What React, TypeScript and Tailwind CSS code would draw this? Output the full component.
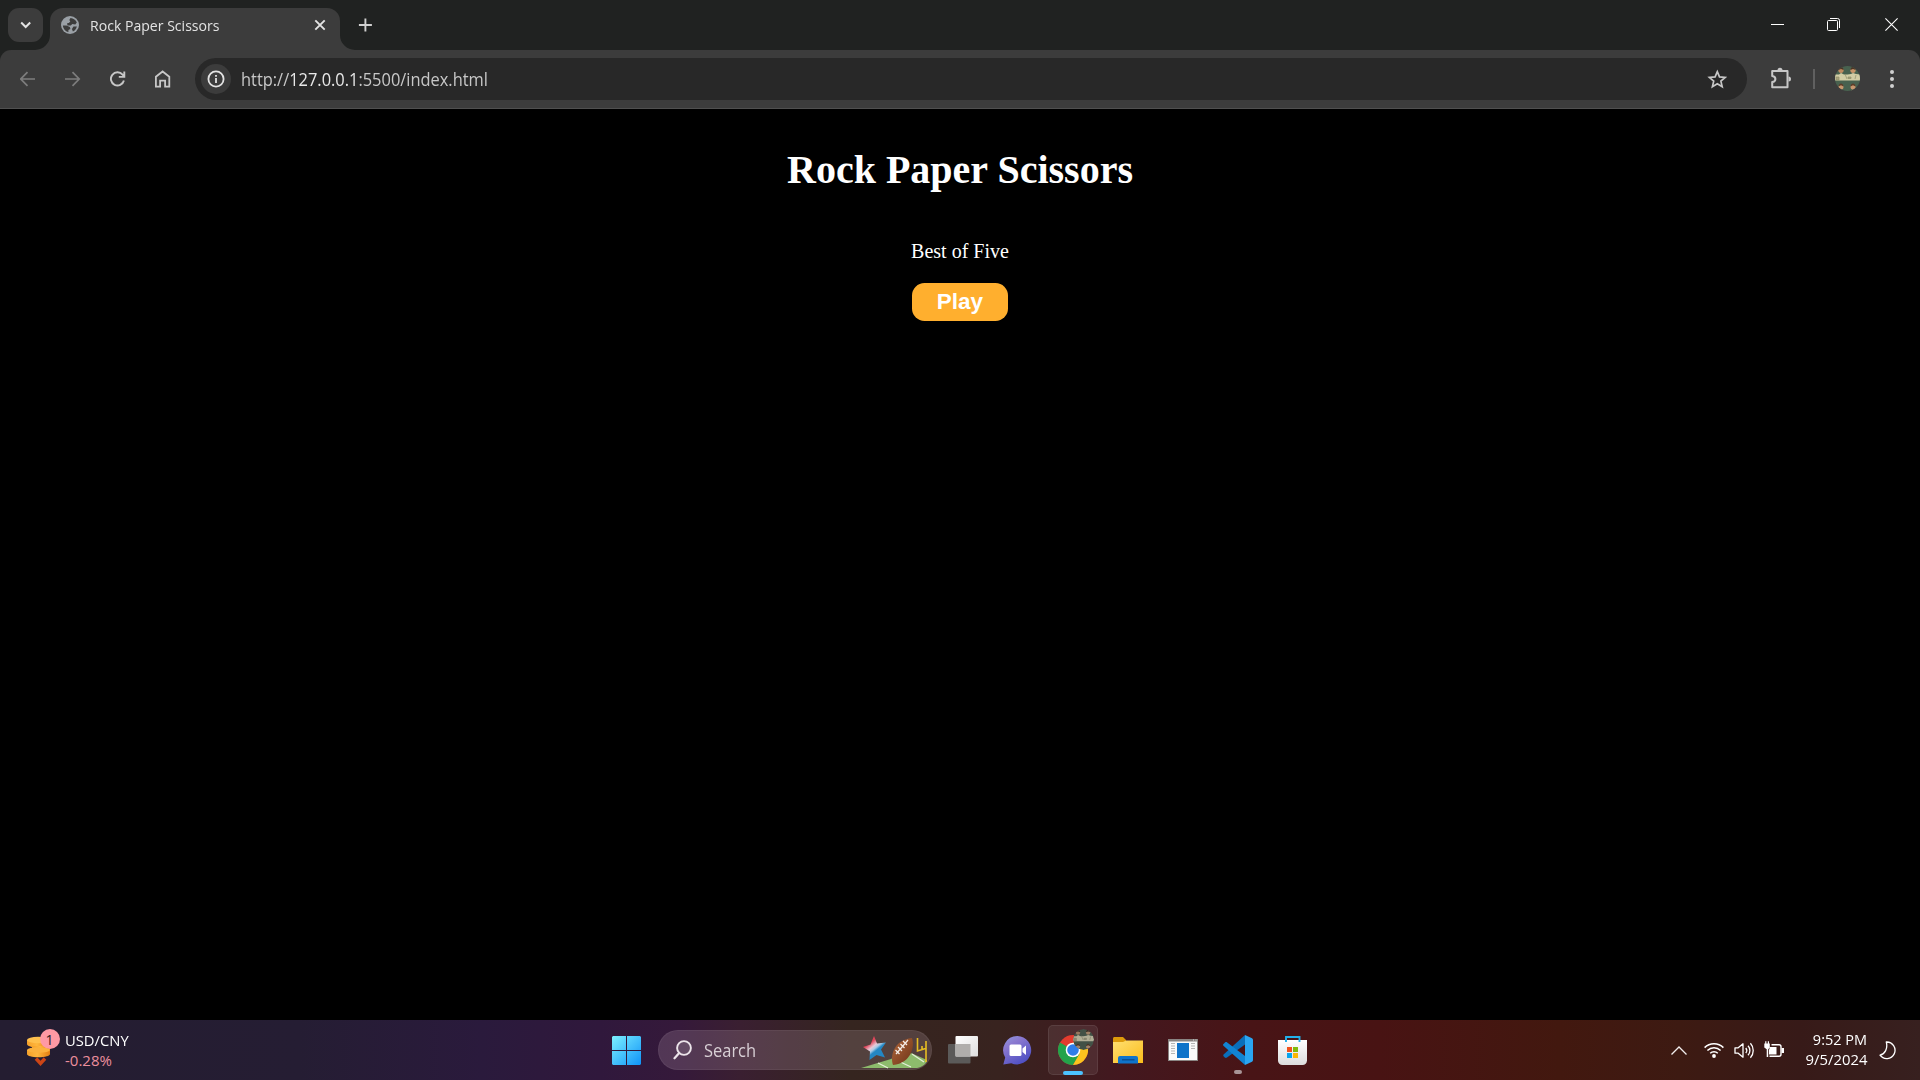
import type { ReactNode } from 'react';

function TabFlare({ side }: { side: 'left' | 'right' }) {
  return (
    <svg
      viewBox="0 0 15 15"
      className={
        side === 'left'
          ? 'absolute bottom-0 -left-[15px] size-[15px]'
          : 'absolute bottom-0 -right-[15px] size-[15px] -scale-x-100'
      }
    >
      <path d="M15 0v15H0A15 15 0 0 0 15 0Z" fill="#3c3c3c" />
    </svg>
  );
}

function TabStrip() {
  return (
    <div className="flex h-[50px] bg-[#202221]">
      <div className="mt-2 ml-2 flex h-[34px] w-[35px] items-center justify-center rounded-[11px] bg-[#3c3c3c]">
        <svg viewBox="0 0 12 8" className="h-2 w-3" fill="none" stroke="#e3e3e3" strokeWidth="2">
          <path d="M1.200 1.500 5.700 6l4.500-4.500" />
        </svg>
      </div>

      <div className="relative mt-[7.500px] ml-[7px] flex h-[42.500px] w-[290px] items-center rounded-t-[13px] bg-[#3c3c3c] pr-[14px] pb-2 pl-[11px]">
        <TabFlare side="left" />
        <svg viewBox="0 0 18 18" className="size-[18px]">
          <circle cx="9" cy="9" r="9" fill="#9aa0a6" />
          <path
            d="M9.500 1.900c3 .2 5.400 2 6.300 4.600l-1.500 2-3-.5-1.500 1.500H6.300V7h1.500l1.500-1.500-1-1.500Z"
            fill="#3c3c3c"
          />
          <path d="M1.900 9.500h3.500l3.500 1.500.5 2-2 1v2C4.400 15.400 2.100 12.800 1.900 9.500Z" fill="#3c3c3c" />
          <path d="M12.500 10.500h3.400c-.5 2.300-2 4.100-4 5l-1-2.500Z" fill="#3c3c3c" />
        </svg>
        <span className="ml-[11px] w-[218px] origin-left scale-x-[0.938] text-[15px] leading-5 whitespace-nowrap text-[#e3e3e3]">
          Rock Paper Scissors
        </span>
        <svg viewBox="0 0 12 12" className="absolute top-[11.500px] right-[14px] size-3" stroke="#e3e3e3" strokeWidth="1.900">
          <path d="M1.300 1.300 10.700 10.700M10.700 1.300 1.300 10.700" />
        </svg>
        <TabFlare side="right" />
      </div>

      <svg viewBox="0 0 14 14" className="mt-[18px] ml-[18px] size-[14px]" stroke="#d0d0d0" strokeWidth="1.900">
        <path d="M7.400.5v13M.900 7h13" />
      </svg>

      <div className="ml-auto flex">
        <div className="flex h-[49px] w-[56px] items-center justify-center">
          <div className="h-px w-[13px] bg-white" />
        </div>
        <div className="flex h-[49px] w-[57px] items-center justify-center">
          <svg viewBox="0 0 13 13" className="size-[13px]" fill="none" stroke="#fff">
            <rect x=".5" y="2.500" width="10" height="10" rx="1" />
            <path d="M3 .5h7.500a2 2 0 0 1 2 2V10" />
          </svg>
        </div>
        <div className="flex h-[49px] w-[58px] items-center justify-center">
          <svg viewBox="0 0 13 13" className="size-[13px]" fill="none" stroke="#fff" strokeWidth="1.100">
            <path d="M.4.4l12.200 12.200M12.600.4.4 12.600" />
          </svg>
        </div>
      </div>
    </div>
  );
}

function NavCell({ children }: { children: ReactNode }) {
  return <div className="flex h-[42px] w-[45px] items-center justify-center">{children}</div>;
}

/* Group portrait inside the profile circle: four heads, light clothes, green ground. */
function Avatar({ className }: { className: string }) {
  return (
    <svg viewBox="0 0 25 25" className={className}>
      <defs>
        <clipPath id="avatar-disc">
          <circle cx="12.500" cy="12.500" r="12.500" />
        </clipPath>
      </defs>
      <g clipPath="url(#avatar-disc)">
        <path d="M0 0h25v25H0z" fill="#48614f" />
        <path d="M0 8.500h4l2-1.500 3 1.500h3.500L16 8l2-1 3 1 4 .5v6H0Z" fill="#d3cda5" />
        <path d="M1 11h3v3H1zM10 8l2 5M13 11h3v1.500h-3zM21 9l-1 4" fill="#a8a27c" stroke="#8f8f6c" strokeWidth=".7" />
        <circle cx="6" cy="4.300" r="2.600" fill="#c08a5f" />
        <circle cx="18" cy="4.300" r="2.600" fill="#c99468" />
        <path d="M3.400 4c0-4 5.200-4 5.200 0L6 3ZM15.400 4c0-4 5.200-4 5.200 0L18 3Z" fill="#4a3527" />
        <circle cx="6" cy="21" r="2.500" fill="#c9976e" />
        <circle cx="18" cy="21" r="2.500" fill="#c9976e" />
        <path d="M3.500 20.500c0-4 5-4 5 0L6 19.300ZM15.500 20.500c0-4 5-4 5 0L18 19.300Z" fill="#5c3d29" />
        <path d="m4 25 2-1.500L8 25ZM16 25l2-1.500 2 1.500Z" fill="#e3d8ae" />
      </g>
    </svg>
  );
}

function Toolbar() {
  return (
    <div className="bg-[#202221]">
      <div className="flex h-[59px] items-start rounded-t-[11px] border-b border-[#505050] bg-[#3c3c3c] pt-2 pl-[5px]">
        <NavCell>
          <svg viewBox="0 0 16 16" className="size-4" fill="none" stroke="#7d7d7d" strokeWidth="1.700">
            <path d="M15 8H1M7.500 1.200.8 8l6.700 6.800" />
          </svg>
        </NavCell>
        <NavCell>
          <svg viewBox="0 0 16 16" className="size-4" fill="none" stroke="#7d7d7d" strokeWidth="1.700">
            <path d="M0 8h14M7.500 1.200 14.200 8l-6.700 6.800" />
          </svg>
        </NavCell>
        <NavCell>
          <svg viewBox="0 0 16 16" className="size-4" fill="none" stroke="#c7c7c7" strokeWidth="1.900">
            <path d="M13.900 9.500A6.600 6.600 0 1 1 12.600 3.700l1 1.200M14.300.5v5.400H8.800" />
          </svg>
        </NavCell>
        <NavCell>
          <svg viewBox="0 0 16 18" className="h-[18px] w-4" fill="none" stroke="#c7c7c7" strokeWidth="1.800">
            <path d="M.9 16.600V6.800l6.700-5.300 6.700 5.300v9.800h-4.200v-6h-5v6Z" />
          </svg>
        </NavCell>

        <div className="ml-[10px] flex h-[42px] w-[1552px] items-center rounded-full bg-[#282828] pr-5 pl-[6px]">
          <div className="flex size-[30px] items-center justify-center rounded-full bg-[#3c3c3c]">
            <svg viewBox="0 0 18 18" className="size-[18px]" fill="none" stroke="#e3e3e3" strokeWidth="1.800">
              <circle cx="9" cy="9" r="7.600" />
              <path d="M9 8v5M9 5v1.800" />
            </svg>
          </div>
          <span className="ml-[10px] origin-left scale-x-[0.938] text-[17.500px] leading-6 whitespace-nowrap text-[#c7c7c7]">
            http://<span className="text-[#e8e8e8]">127.0.0.1</span>:5500/index.html
          </span>
          <svg viewBox="0 0 20 20" className="ml-auto size-5" fill="none" stroke="#c7c7c7" strokeWidth="1.700">
            <path d="m10.300 2.600 2.200 5.300 5.700.5-4.300 3.700 1.300 5.600-4.900-3-4.900 3 1.300-5.600-4.300-3.700 5.700-.5Z" />
          </svg>
        </div>

        <div className="flex h-[42px] items-center">
          <svg viewBox="0 0 22 22" className="mb-[2px] ml-[23px] size-[22px]" fill="none" stroke="#c7c7c7" strokeWidth="2">
            <path d="M3 4h14.500v16.200H2.200v-5.100c2.300-.3 3.200-1.300 3.200-3.100S4.500 9.200 2.200 8.900V4Z" strokeLinejoin="round" />
            <path d="M7.500 3.200a2.500 2.500 0 0 1 5 0ZM18.500 9.500a2.500 2.500 0 0 1 0 5Z" fill="#c7c7c7" stroke="none" />
          </svg>
          <div className="ml-[21px] h-5 w-[2px] bg-[#606060]" />
          <Avatar className="mb-px ml-[20px] size-[25px]" />
          <svg viewBox="0 0 4 18" className="ml-[30px] h-[18px] w-1" fill="#d0d0d0">
            <circle cx="2" cy="2" r="2" />
            <circle cx="2" cy="9" r="2" />
            <circle cx="2" cy="16" r="2" />
          </svg>
        </div>
      </div>
    </div>
  );
}

function Page() {
  return (
    <main className="flex flex-1 flex-col items-center bg-black pt-[38px] font-['Liberation_Serif',serif] text-white">
      <h1 className="text-[40px] leading-[45px] font-bold">Rock Paper Scissors</h1>
      <p className="mt-[48px] text-[20px] leading-[23px]">Best of Five</p>
      <button className="mt-5 h-[38px] w-24 rounded-[12.500px] bg-[#ffaf2e] pb-px font-['Liberation_Sans',sans-serif] text-[22.500px] leading-[25px] font-bold">
        Play
      </button>
    </main>
  );
}

function MarketWidget() {
  return (
    <div className="flex w-[612px] items-center pl-[26px]">
      <div className="relative h-[40px] w-[34px]">
        <svg viewBox="0 0 34 40" className="h-[40px] w-[34px]">
          <defs>
            <linearGradient id="coin" x1="0" x2="1">
              <stop offset="0" stopColor="#f5a02a" />
              <stop offset=".45" stopColor="#ffb63c" />
              <stop offset="1" stopColor="#e27f12" />
            </linearGradient>
          </defs>
          <path d="M1 10v4c0 2 5 3.500 11 3.500S23 16 23 14v-4Z" fill="url(#coin)" />
          <ellipse cx="12" cy="10" rx="11" ry="3.300" fill="#ffc04d" />
          <path d="M6 16v4c0 1.500 4 2.500 9 2.500s9-1 9-2.500v-4Z" fill="url(#coin)" />
          <path d="M1 20v4c0 2 5 3.200 11.500 3.200S24 26 24 24v-4Z" fill="url(#coin)" />
          <ellipse cx="12.500" cy="20" rx="11.500" ry="2.800" fill="#fbb13d" />
          <path d="m10 28.500 4.500 5 4.500-5" fill="none" stroke="#cc4516" strokeWidth="3.500" />
        </svg>
        <div className="absolute -top-[1px] right-[.5px] flex size-5 items-center justify-center rounded-full bg-[#ff99a4] text-[14px] text-[#2b1b22]">
          1
        </div>
      </div>
      <div className="ml-[5px] text-[15px] leading-5">
        <div className="origin-left scale-x-[0.985] text-white">USD/CNY</div>
        <div className="text-[#ec8f9d]">-0.28%</div>
      </div>
    </div>
  );
}

function SearchIllustration() {
  return (
    <svg viewBox="0 0 72 40" className="ml-auto h-10 w-[72px]">
      <defs>
        <linearGradient id="star" x1="6" y1="8" x2="22" y2="28" gradientUnits="userSpaceOnUse">
          <stop offset=".3" stopColor="#e0455a" />
          <stop offset=".48" stopColor="#e9c9d6" />
          <stop offset=".58" stopColor="#a9cbe6" />
          <stop offset=".68" stopColor="#2387c4" />
        </linearGradient>
        <linearGradient id="ball" x1="0" y1="0" x2="1" y2="1">
          <stop offset="0" stopColor="#b0663a" />
          <stop offset="1" stopColor="#6d3418" />
        </linearGradient>
      </defs>
      <path d="M3 38 53 23l16 7c0 3-4 7-10 8Z" fill="#8dbb6c" />
      <path d="m20 33 10 5M34 28l19 9M54 24l12 8" stroke="#e5efd9" strokeWidth="1.300" />
      <path d="m16 6 3 7.500 9-1-5 7 4 8-8.500-2.500-7 5 .5-8.500L5 17l7.500-2.500Z" fill="url(#star)" />
      <path d="M59.500 8v13l8-2.500M68 11v21M64 20v-4" fill="none" stroke="#e6bd22" strokeWidth="1.600" />
      <path d="M35 35c-3-8 0-25 19-27 3 9-1 25-19 27Z" fill="url(#ball)" />
      <path d="m38 24 12-14M37.500 20l4 4M40 17l4 4M42.500 14l4 4M45 11l4 4" stroke="#f4ece6" strokeWidth="1.300" />
    </svg>
  );
}

function TaskCell({ children }: { children: ReactNode }) {
  return <div className="flex w-[55px] items-center justify-center">{children}</div>;
}

function Taskbar() {
  return (
    <footer className="flex h-[60px] bg-[linear-gradient(90deg,#241d31_0px,#251d33_300px,#2a1a3c_480px,#30183c_600px,#35193a_680px,#3a1f31_740px,#35251f_850px,#38231f_1000px,#43181f_1120px,#481416_1250px,#481313_1380px,#42180f_1560px,#3d1a12_1680px,#371a18_1800px,#37201f_1920px)] text-white">
      <MarketWidget />
      <svg viewBox="0 0 29 29" className="mt-4 size-[29px]">
        <defs>
          <linearGradient id="win" x1="0" y1="0" x2="29" y2="29" gradientUnits="userSpaceOnUse">
            <stop offset="0" stopColor="#7df0ff" />
            <stop offset="1" stopColor="#0f93f8" />
          </linearGradient>
        </defs>
        <path d="M1 0h13v14H0V1ZM15 0h13l1 1v13H15ZM0 15h14v14H1l-1-1ZM15 15h14v13l-1 1H15Z" fill="url(#win)" />
      </svg>

      <div className="mt-[10px] ml-[17px] flex h-10 w-[274px] items-center rounded-full border border-white/5 bg-[#ffe6f0]/15 pr-px pl-[14px]">
        <svg viewBox="0 0 19 20" className="h-5 w-[19px]" fill="none" stroke="#ece4ea" strokeWidth="1.900">
          <circle cx="11" cy="8" r="6.900" fill="#fff" fillOpacity=".1" />
          <path d="m6.200 13-4.700 5.300" strokeLinecap="round" strokeWidth="2.200" />
        </svg>
        <span className="ml-[11.500px] w-[56px] origin-left scale-x-[0.94] text-[17.500px] leading-6 text-[#d8cfd5]">Search</span>
        <SearchIllustration />
      </div>

      <div className="ml-[3px] flex">
        <TaskCell>
          <svg viewBox="0 0 30 28" className="h-7 w-[30px]">
            <defs>
              <linearGradient id="tvFront" x2="1" y2="1">
                <stop stopColor="#fff" />
                <stop offset="1" stopColor="#dedede" />
              </linearGradient>
            </defs>
            <rect y="8" width="22.500" height="19.500" rx="1" fill="#5b5a59" />
            <rect x="7.500" width="22.500" height="20.500" rx="1" fill="url(#tvFront)" />
            <path d="M7.500 8h15v12.500h-15z" fill="#b0aeac" />
          </svg>
        </TaskCell>
        <TaskCell>
          <svg viewBox="0 0 29 29" className="size-[29px]">
            <defs>
              <linearGradient id="chat" x1="0" x2=".6" y2="1">
                <stop stopColor="#8f9ae0" />
                <stop offset=".35" stopColor="#8a78cf" />
                <stop offset="1" stopColor="#4f50c4" />
              </linearGradient>
            </defs>
            <path d="M14.500 0a14.200 14.200 0 1 1-6.200 27.200L.3 28.500l1.900-7A14.200 14.200 0 0 1 14.500 0Z" fill="url(#chat)" />
            <rect x="6.500" y="8.500" width="12" height="11.500" rx="1.500" fill="#fff" />
            <path d="m19.500 12.500 3.500-3v9.500l-3.500-3Z" fill="#fff" />
          </svg>
        </TaskCell>
        <TaskCell>
          <div className="relative flex size-[50px] items-center justify-center rounded-[5px] border border-white/8 bg-white/8">
            <svg viewBox="0 0 30 30" className="size-[30px]">
              <circle cx="15" cy="15" r="15" fill="#e33b2e" />
              <path d="M15 15 2 7.500A15 15 0 0 0 15 30l7-11Z" fill="#23a34a" />
              <path d="M15 7.500h13A15 15 0 0 1 15 30l6.500-11.200Z" fill="#fcc31e" />
              <circle cx="15" cy="15" r="7.300" fill="#fff" />
              <circle cx="15" cy="15" r="5.800" fill="#2f7de9" />
            </svg>
            <Avatar className="absolute top-[3px] right-[3px] size-[21px] rounded-full brightness-85 saturate-70" />
            <div className="absolute -bottom-px h-1 w-5 rounded-full bg-[#4cc2ff]" />
          </div>
        </TaskCell>
        <TaskCell>
          <svg viewBox="0 0 30 27" className="h-[27px] w-[30px]">
            <defs>
              <linearGradient id="folder" x2="1" y2="1">
                <stop stopColor="#ffdf72" />
                <stop offset="1" stopColor="#fbbd1b" />
              </linearGradient>
            </defs>
            <path d="M0 1.500C0 .7.600 0 1.500 0H10l3 3v6H0Z" fill="#dd9a0b" />
            <path d="M0 5h10l3-1.500h17V26H0Z" fill="url(#folder)" />
            <path d="M5 26.500V21a2 2 0 0 1 2-2h16a2 2 0 0 1 2 2v5.500Z" fill="#0f74cb" />
            <path d="M9 22.800h12.500" stroke="#0a4a8c" strokeWidth="1.300" />
          </svg>
        </TaskCell>
        <TaskCell>
          <svg viewBox="0 0 30 22" className="h-[22px] w-[30px]">
            <path d="M0 0h30v22H0z" fill="#8a8583" />
            <path d="M1 2.500h28V21H1z" fill="#fafafa" />
            <path d="M25 1h1M27.500 1h1" stroke="#ddd" />
            <path d="M9 4h12v15H9z" fill="#0f73c9" />
            <path d="M3 4.500h4M3 7h4M3 9.500h4M3 12h4M3 14.500h4M23 4.500h4M23 7h4M23 9.500h4" stroke="#b5b5b5" />
          </svg>
        </TaskCell>
        <TaskCell>
          <div className="relative flex h-[60px] items-center justify-center">
            <svg viewBox="0 0 30 30" className="size-[30px]">
              <path d="M.3 19.700 22 0v9.500L4 22.600c-.8.500-1.500.4-2.200 0L.3 21Z" fill="#0a6fba" />
              <path d="M0 9.500 2 7.500c.8-.6 1.600-.4 2.200 0L22 21v9L.4 10.700Z" fill="#1184d3" />
              <path d="M22 0l7 3.300c.7.300 1 .9 1 1.600v20.200c0 .7-.3 1.300-1 1.600L22 30Z" fill="#2aa5f1" />
            </svg>
            <div className="absolute bottom-[6px] h-1 w-2 rounded-full bg-[#a89496]" />
          </div>
        </TaskCell>
        <TaskCell>
          <svg viewBox="0 0 29 30" className="h-[30px] w-[29px]">
            <defs>
              <linearGradient id="bag" y2="1" x2="0">
                <stop stopColor="#fff" />
                <stop offset="1" stopColor="#dcdcdc" />
              </linearGradient>
            </defs>
            <path d="M0 5h29v20.500a4.500 4.500 0 0 1-4.500 4.500h-20A4.500 4.500 0 0 1 0 25.500Z" fill="url(#bag)" />
            <path d="M8 7V2h13.500v5" fill="none" stroke="#22b1ea" strokeWidth="1.900" />
            <path d="M9 12h5v5H9z" fill="#f1511b" />
            <path d="M15 12h5v5h-5z" fill="#80bb0a" />
            <path d="M9 18h5v5H9z" fill="#07a5ee" />
            <path d="M15 18h5v5h-5z" fill="#fbb704" />
          </svg>
        </TaskCell>
      </div>

      <div className="ml-auto flex items-center pr-[24px]">
        <svg viewBox="0 0 16 9" className="h-[9px] w-4" fill="none" stroke="#f2eeee" strokeWidth="1.300">
          <path d="m.5 8.500 7.500-7.500 7.500 7.500" />
        </svg>
        <svg viewBox="0 0 20 16" className="mb-[1px] ml-[17px] h-4 w-5" fill="none" stroke="#fff" strokeWidth="1.500">
          <path d="M.6 5.600a13.300 13.300 0 0 1 18.800 0M3.400 8.500a9.300 9.300 0 0 1 13.200 0M6.200 11.300a5.400 5.400 0 0 1 7.600 0" />
          <circle cx="10" cy="14" r="1.900" fill="#fff" stroke="none" />
        </svg>
        <svg viewBox="0 0 21 17" className="ml-[10px] h-[17px] w-[21px]" fill="none" stroke="#fff" strokeWidth="1.300">
          <path d="M1 5.800h3.200L9 1.800v13.400l-4.800-4H1Z" strokeLinejoin="round" />
          <path d="M11.800 6a4 4 0 0 1 0 5M14 3.700a7 7 0 0 1 0 9.600M16.400 1.300a10.600 10.600 0 0 1 0 14.400" />
        </svg>
        <svg viewBox="0 0 20 17" className="mb-[2px] ml-[9px] h-[17px] w-5">
          <path d="M7.500 3.800H15a2 2 0 0 1 2 2v7.400a2 2 0 0 1-2 2H5.500" fill="none" stroke="#fff" strokeWidth="1.400" />
          <path d="M17.500 7h2.500v5h-2.500zM6 6h6.500v7.500H5V9ZM.3 2.500h5.500v4L4.200 8.300V16H2.700V8.300L.3 6.500ZM1.200.3h1.200v2.500H1.200zM3.800.3H5v2.500H3.800z" fill="#fff" />
        </svg>
        <div className="mb-[2px] ml-[21px] w-[62px] text-right text-[15px] leading-5">
          <div className="origin-right scale-x-[0.965]">9:52 PM</div>
          <div className="origin-right scale-x-[0.99]">9/5/2024</div>
        </div>
        <svg viewBox="0 0 17 19" className="ml-[12px] h-[19px] w-[17px]" fill="none" stroke="#fff" strokeWidth="1.300">
          <path d="M7.300 1A8.300 8.300 0 1 1 1 14.200C6 13 9 7.500 7.300 1Z" strokeLinejoin="round" />
        </svg>
      </div>
    </footer>
  );
}

export default function App() {
  return (
    <div className="flex h-[1080px] w-[1920px] flex-col overflow-hidden bg-black font-['Open_Sans','Noto_Sans',sans-serif]">
      <TabStrip />
      <Toolbar />
      <Page />
      <Taskbar />
    </div>
  );
}
